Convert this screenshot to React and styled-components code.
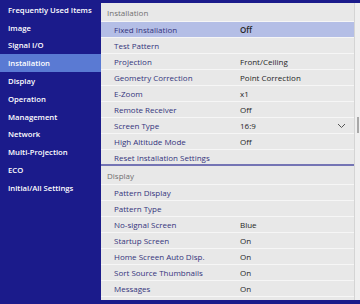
import React from "react";
import styled, { createGlobalStyle } from "styled-components";

const Global = createGlobalStyle`
  body {
    margin: 0;
    background: #1b1b8b;
  }
`;

const Screen = styled.div`
  width: 360px;
  height: 304px;
  display: flex;
  background: #1b1b8b;
  overflow: hidden;
  font-family: "Open Sans", "Noto Sans", sans-serif;
  font-size: 8px;
`;

const Sidebar = styled.div`
  width: 101px;
  padding-top: 1px;
  display: flex;
  flex-direction: column;
`;

const NavItem = styled.div`
  height: 17.8px;
  display: flex;
  align-items: center;
  padding-left: 8px;
  color: #ffffff;
  font-size: 7.7px;
  font-weight: 600;
  background: ${(p) => (p.active ? "#5a7ad3" : "transparent")};
`;

const Panel = styled.div`
  flex: 1;
  margin-top: 3px;
  height: 297px;
  display: flex;
  background: #e8e8e8;
  overflow: hidden;
`;

const List = styled.div`
  flex: 1;
  display: flex;
  flex-direction: column;
`;

const Header = styled.div`
  height: 18px;
  flex-shrink: 0;
  display: flex;
  align-items: center;
  padding-left: 6px;
  color: #707070;
  border-bottom: 1px solid #f6f6f6;
`;

const Row = styled.div`
  height: 16px;
  flex-shrink: 0;
  box-sizing: border-box;
  display: flex;
  align-items: center;
  padding-left: 13px;
  padding-right: 8px;
  background: ${(p) => (p.selected ? "#b4bee6" : "transparent")};
  border-bottom: ${(p) => (p.last ? "2px solid #7474b4" : "1px solid #f6f6f6")};
`;

const Label = styled.span`
  width: 126px;
  color: #34347c;
`;

const Value = styled.span`
  flex: 1;
  color: #262626;
  font-weight: ${(p) => (p.bold ? 600 : 400)};
`;

const Chevron = styled.svg`
  width: 9px;
  height: 6px;
`;

const Scrollbar = styled.div`
  width: 5px;
  border-left: 1px solid #d4d4d4;
  background: #efefef;
  display: flex;
  flex-direction: column;
  padding-top: 114px;
`;

const Thumb = styled.div`
  margin-left: 2px;
  width: 2px;
  height: 16px;
  background: #a8a8a8;
`;

const nav = [
  "Frequently Used Items",
  "Image",
  "Signal I/O",
  "Installation",
  "Display",
  "Operation",
  "Management",
  "Network",
  "Multi-Projection",
  "ECO",
  "Initial/All Settings",
];

const installation = [
  ["Fixed Installation", "Off"],
  ["Test Pattern", ""],
  ["Projection", "Front/Ceiling"],
  ["Geometry Correction", "Point Correction"],
  ["E-Zoom", "x1"],
  ["Remote Receiver", "Off"],
  ["Screen Type", "16:9", true],
  ["High Altitude Mode", "Off"],
  ["Reset Installation Settings", ""],
];

const display = [
  ["Pattern Display", ""],
  ["Pattern Type", ""],
  ["No-signal Screen", "Blue"],
  ["Startup Screen", "On"],
  ["Home Screen Auto Disp.", "On"],
  ["Sort Source Thumbnails", "On"],
  ["Messages", "On"],
  ["Menu Rotation", "Off"],
];

const App = () => {
  return (
    <Screen>
      <Global />
      <Sidebar>
        {nav.map((n) => (
          <NavItem key={n} active={n === "Installation"}>
            {n}
          </NavItem>
        ))}
      </Sidebar>
      <Panel>
        <List>
          <Header>Installation</Header>
          {installation.map(([l, v, more], i) => (
            <Row key={l} selected={i === 0} last={i === installation.length - 1}>
              <Label>{l}</Label>
              <Value bold={i === 0}>{v}</Value>
              {more && (
                <Chevron viewBox="0 0 9 6">
                  <path d="M1 1l3.5 3.5L8 1" fill="none" stroke="#555" strokeWidth="1" />
                </Chevron>
              )}
            </Row>
          ))}
          <Header>Display</Header>
          {display.map(([l, v]) => (
            <Row key={l}>
              <Label>{l}</Label>
              <Value>{v}</Value>
            </Row>
          ))}
        </List>
        <Scrollbar>
          <Thumb />
        </Scrollbar>
      </Panel>
    </Screen>
  );
};

export default App;
